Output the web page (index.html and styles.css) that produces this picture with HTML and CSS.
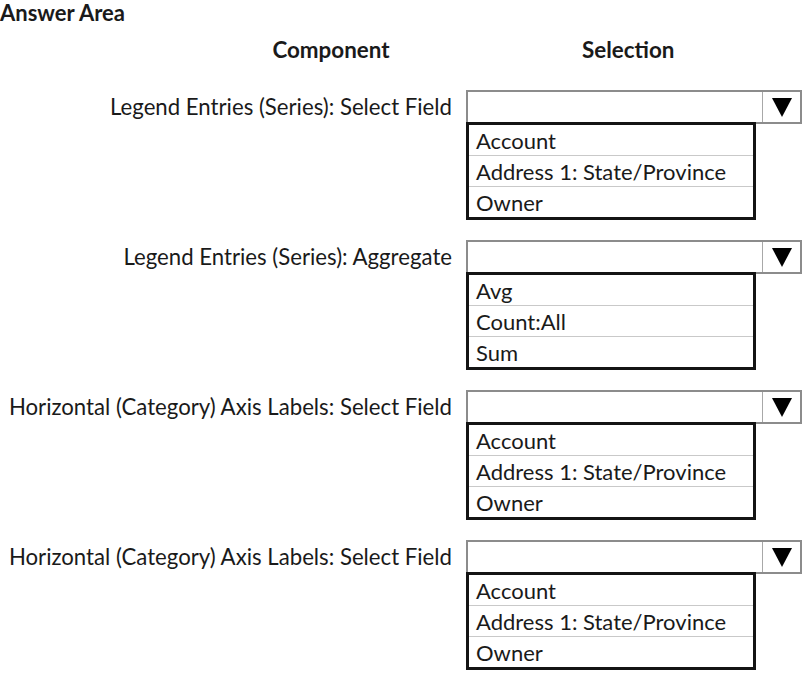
FILE: index.html
```html
<!DOCTYPE html>
<html lang="en">
<head>
<meta charset="utf-8">
<title>Answer Area</title>
<link rel="stylesheet" href="styles.css">
</head>
<body>
<h1 class="title">Answer Area</h1>
<div class="headers">
  <div class="head head-comp">Component</div>
  <div class="head head-sel">Selection</div>
</div>
<div class="blocks">
  <div class="block">
    <div class="label">Legend Entries (Series): Select Field</div>
    <div class="field">
      <div class="select"><div class="arrow"><svg width="20" height="19" viewBox="0 0 20 19"><polygon points="0,0 20,0 10,19" fill="#000"/></svg></div></div>
      <div class="list">
        <div class="opt">Account</div>
        <div class="opt">Address 1: State/Province</div>
        <div class="opt">Owner</div>
      </div>
    </div>
  </div>
  <div class="block">
    <div class="label">Legend Entries (Series): Aggregate</div>
    <div class="field">
      <div class="select"><div class="arrow"><svg width="20" height="19" viewBox="0 0 20 19"><polygon points="0,0 20,0 10,19" fill="#000"/></svg></div></div>
      <div class="list">
        <div class="opt">Avg</div>
        <div class="opt">Count:All</div>
        <div class="opt">Sum</div>
      </div>
    </div>
  </div>
  <div class="block">
    <div class="label">Horizontal (Category) Axis Labels: Select Field</div>
    <div class="field">
      <div class="select"><div class="arrow"><svg width="20" height="19" viewBox="0 0 20 19"><polygon points="0,0 20,0 10,19" fill="#000"/></svg></div></div>
      <div class="list">
        <div class="opt">Account</div>
        <div class="opt">Address 1: State/Province</div>
        <div class="opt">Owner</div>
      </div>
    </div>
  </div>
  <div class="block">
    <div class="label">Horizontal (Category) Axis Labels: Select Field</div>
    <div class="field">
      <div class="select"><div class="arrow"><svg width="20" height="19" viewBox="0 0 20 19"><polygon points="0,0 20,0 10,19" fill="#000"/></svg></div></div>
      <div class="list">
        <div class="opt">Account</div>
        <div class="opt">Address 1: State/Province</div>
        <div class="opt">Owner</div>
      </div>
    </div>
  </div>
</div>
</body>
</html>
```
FILE: styles.css
```css
html, body {
  margin: 0;
  padding: 0;
  background: #fff;
}
body {
  width: 806px;
  font-family: Lato, "Open Sans", sans-serif;
  color: #1a1a1a;
}
.title {
  margin: 0;
  font-size: 22px;
  line-height: 26px;
  font-weight: 700;
}
.headers {
  display: flex;
  margin-top: 12px;
  height: 24px;
  line-height: 24px;
  font-size: 22.4px;
  font-weight: 700;
}
.head-comp {
  width: 118px;
  margin-left: 272px;
  text-align: center;
}
.head-sel {
  width: 92px;
  margin-left: 192px;
  text-align: center;
}
.blocks {
  margin-top: 28px;
  display: flex;
  flex-direction: column;
  gap: 20px;
}
.block {
  display: flex;
  align-items: flex-start;
}
.label {
  width: 452px;
  text-align: right;
  font-size: 22.2px;
  line-height: 34px;
  white-space: nowrap;
}
.field {
  margin-left: 14px;
  width: 336px;
}
.select {
  height: 34px;
  box-sizing: border-box;
  border: 2px solid #8c8c8c;
  display: flex;
  justify-content: flex-end;
  background: #fff;
}
.arrow {
  width: 37px;
  border-left: 1px solid #a8a8a8;
  display: flex;
  align-items: center;
  justify-content: center;
}
.list {
  width: 290px;
  box-sizing: border-box;
  border: 3px solid #141414;
  margin-top: -2px;
  height: 98px;
  background: #fff;
}
.opt {
  height: 30px;
  line-height: 31px;
  padding-left: 7px;
  font-size: 22px;
  border-bottom: 1px solid #c9c9c9;
  white-space: nowrap;
}
.opt:last-child {
  border-bottom: none;
}
```
